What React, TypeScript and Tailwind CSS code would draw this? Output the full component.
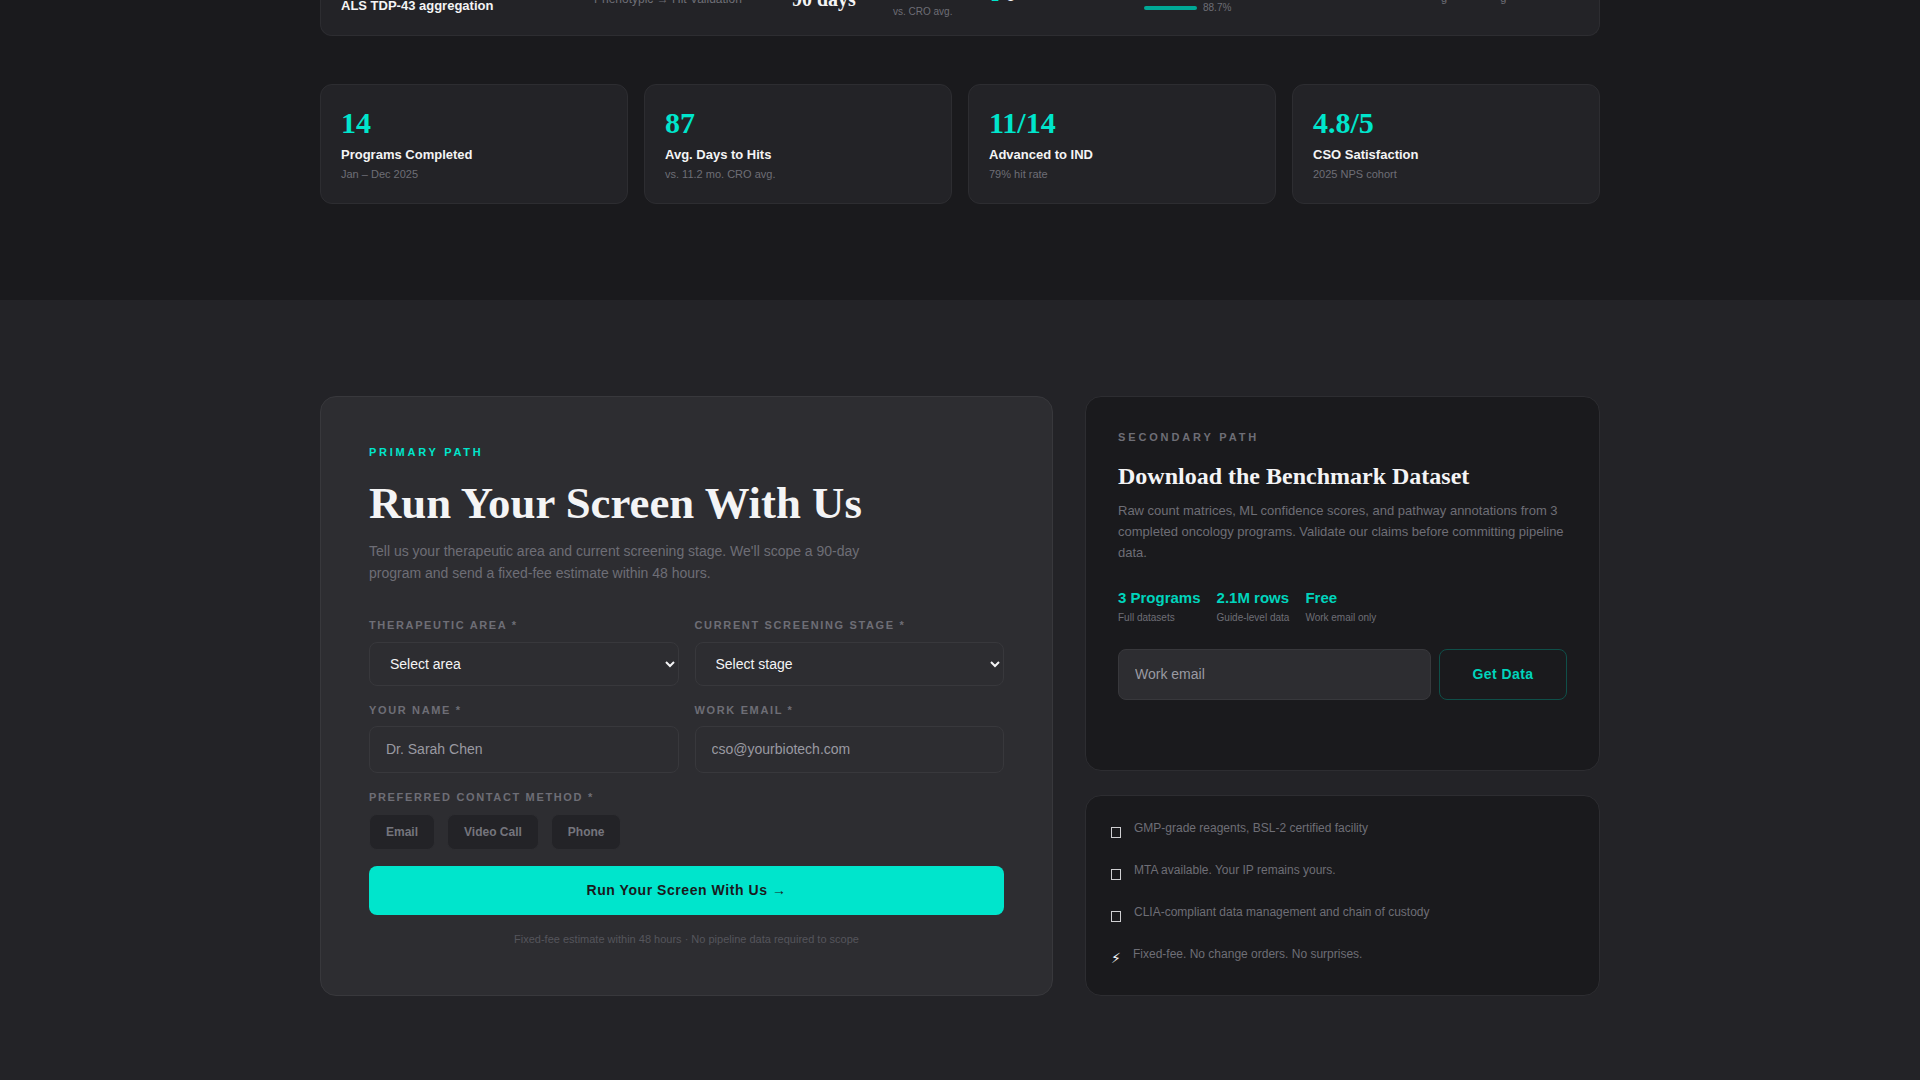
import React from 'react';

const SERIF = "font-['Liberation_Serif',serif]";

const stats = [
  { value: '14', label: 'Programs Completed', sub: 'Jan – Dec 2025' },
  { value: '87', label: 'Avg. Days to Hits', sub: 'vs. 11.2 mo. CRO avg.' },
  { value: '11/14', label: 'Advanced to IND', sub: '79% hit rate' },
  { value: '4.8/5', label: 'CSO Satisfaction', sub: '2025 NPS cohort' },
];

const dataset = [
  { value: '3 Programs', sub: 'Full datasets' },
  { value: '2.1M rows', sub: 'Guide-level data' },
  { value: 'Free', sub: 'Work email only' },
];

const trust = [
  { bolt: false, text: 'GMP-grade reagents, BSL-2 certified facility' },
  { bolt: false, text: 'MTA available. Your IP remains yours.' },
  { bolt: false, text: 'CLIA-compliant data management and chain of custody' },
  { bolt: true, text: 'Fixed-fee. No change orders. No surprises.' },
];

function FieldLabel({ children }: { children: React.ReactNode }) {
  return (
    <label className="block mb-[9px] text-[11px] leading-[13px] font-bold uppercase tracking-[0.15em] text-[#6e6e76]">
      {children}
    </label>
  );
}

function SelectField({ label, placeholder }: { label: string; placeholder: string }) {
  return (
    <div>
      <FieldLabel>{label}</FieldLabel>
      <select className="mt-[1px] w-full h-[44px] px-4 rounded-lg border border-[#38383c] bg-[#2d2d31] text-[14px] text-[#f4f4f5]">
        <option>{placeholder}</option>
      </select>
    </div>
  );
}

function TextField({ label, placeholder }: { label: string; placeholder: string }) {
  return (
    <div>
      <FieldLabel>{label}</FieldLabel>
      <input
        placeholder={placeholder}
        className="w-full h-[47px] px-4 pb-[2px] rounded-lg border border-[#38383c] bg-[#2d2d31] text-[14px] placeholder:text-[#9a9aa2]"
      />
    </div>
  );
}

export default function App() {
  return (
    <div className="h-screen overflow-hidden bg-[#232327] font-['Liberation_Sans',sans-serif]">
      {/* Results section, page is scrolled so the table top is cut off */}
      <section className="h-[300px] bg-[#1a1a1d] overflow-hidden">
        <div className="w-[1280px] mx-auto">
          <div className="-mt-[20px] h-[56px] rounded-b-xl border border-t-0 border-[#2d2d31] bg-[#232327] px-[20px] overflow-hidden">
            <div className="grid grid-cols-[253px_198px_198px_154px_286px_1fr] text-[#6e6e76]">
              <div className="pt-[18px] text-[13px] leading-[16px] font-semibold text-[#f4f4f5]">ALS TDP-43 aggregation</div>
              <div className="pt-[11px] text-[12px] leading-[16px]">Phenotypic → Hit Validation</div>
              <div className="pt-[8px]">
                <div className={`${SERIF} text-[20px] leading-[22px] font-bold text-[#f4f4f5]`}>90 days</div>
                <div className="ml-[101px] -mt-[5px] text-[10px] leading-[14px]">vs. CRO avg.</div>
              </div>
              <div className="pt-[8px] pl-[1px] text-[14px] leading-[16px] font-bold text-[#00e5cc] flex gap-[8px]">
                <span>1</span>
                <span className="text-[#f4f4f5]">3</span>
              </div>
              <div className="pt-[21px] flex items-center gap-[6px] self-start">
                <div className="w-[53px] h-[4px] rounded-full bg-[#00a896]" />
                <span className="text-[10px] leading-[14px]">88.7%</span>
              </div>
              <div className="pt-[10px] pl-[11px] text-[11px] leading-[16px] flex gap-[53px]">
                <span>g</span>
                <span>g</span>
              </div>
            </div>
          </div>

          <div className="mt-[48px] grid grid-cols-4 gap-4">
            {stats.map((s) => (
              <div key={s.label} className="h-[120px] rounded-xl border border-[#2d2d31] bg-[#232327] px-5 pt-[22px]">
                <div className={`${SERIF} text-[30px] leading-[32px] font-bold text-[#00e5cc]`}>{s.value}</div>
                <div className="mt-[8px] text-[13px] leading-[16px] font-semibold text-[#f4f4f5]">{s.label}</div>
                <div className="mt-[4px] text-[11px] leading-[14px] text-[#6e6e76]">{s.sub}</div>
              </div>
            ))}
          </div>
        </div>
      </section>

      {/* Conversion section */}
      <section className="pt-[96px]">
        <div className="w-[1280px] mx-auto grid grid-cols-[733px_515px] gap-8">
          <div className="h-[600px] rounded-2xl border border-[#38383c] bg-[#2d2d31] px-[48px] pt-[48px]">
            <div className="text-[11px] leading-[14px] font-bold uppercase tracking-[0.25em] text-[#00e5cc]">Primary Path</div>
            <h2 className={`${SERIF} mt-[19px] text-[44.8px] leading-[50px] font-bold text-[#f4f4f5]`}>Run Your Screen With Us</h2>
            <p className="mt-[12px] w-[520px] text-[14px] leading-[22px] text-[#6e6e76]">
              Tell us your therapeutic area and current screening stage. We'll scope a 90-day program and send a fixed-fee estimate within 48 hours.
            </p>

            <div className="mt-[35px] grid grid-cols-2 gap-x-4">
              <SelectField label="Therapeutic Area *" placeholder="Select area" />
              <SelectField label="Current Screening Stage *" placeholder="Select stage" />
            </div>
            <div className="mt-[18px] grid grid-cols-2 gap-x-4">
              <TextField label="Your Name *" placeholder="Dr. Sarah Chen" />
              <TextField label="Work Email *" placeholder="cso@yourbiotech.com" />
            </div>

            <div className="mt-[18px]">
              <FieldLabel>Preferred Contact Method *</FieldLabel>
              <div className="mt-[10px] flex gap-[12px]">
                {['Email', 'Video Call', 'Phone'].map((m) => (
                  <button key={m} className="h-[36px] px-[16px] rounded-lg border border-[#2d2d31] bg-[#232327] text-[12px] font-semibold text-[#75757d]">
                    {m}
                  </button>
                ))}
              </div>
            </div>

            <button className="mt-[16px] w-full h-[49px] rounded-lg bg-[#00e5cc] text-[14px] font-bold tracking-[0.04em] text-[#1a1a1d]">
              Run Your Screen With Us →
            </button>
            <p className="mt-[17px] text-center text-[11px] leading-[14px] text-[#55555c]">
              Fixed-fee estimate within 48 hours · No pipeline data required to scope
            </p>
          </div>

          <div className="flex flex-col gap-[24px]">
            <div className="h-[375px] rounded-2xl border border-[#2d2d31] bg-[#1a1a1d] px-[32px] pt-[33px]">
              <div className="text-[11px] leading-[14px] font-bold uppercase tracking-[0.26em] text-[#6e6e76]">Secondary Path</div>
              <h3 className={`${SERIF} mt-[17px] text-[24px] leading-[30px] font-bold text-[#f4f4f5]`}>Download the Benchmark Dataset</h3>
              <p className="mt-[9px] text-[13px] leading-[21px] text-[#6e6e76]">
                Raw count matrices, ML confidence scores, and pathway annotations from 3 completed oncology programs. Validate our claims before committing pipeline data.
              </p>
              <div className="mt-[25px] flex gap-[16px]">
                {dataset.map((d) => (
                  <div key={d.value}>
                    <div className="text-[15px] leading-[20px] font-bold text-[#00d4bc]">{d.value}</div>
                    <div className="mt-[3px] text-[10px] leading-[14px] text-[#6e6e76]">{d.sub}</div>
                  </div>
                ))}
              </div>
              <div className="mt-[24px] flex gap-[8px]">
                <input
                  placeholder="Work email"
                  className="flex-1 min-w-0 h-[51px] px-4 pb-[2px] rounded-lg border border-[#38383c] bg-[#2d2d31] text-[14px] placeholder:text-[#9a9aa2]"
                />
                <button className="w-[128px] h-[51px] rounded-lg border border-[#0f4f49] bg-transparent text-[14px] font-bold tracking-[0.03em] text-[#00d4bc]">
                  Get Data
                </button>
              </div>
            </div>

            <div className="h-[201px] rounded-2xl border border-[#2d2d31] bg-[#1a1a1d] px-[24px] pt-[24px] flex flex-col gap-[18px]">
              {trust.map((t) => (
                <div key={t.text} className="flex gap-[8px] h-[24px]">
                  {t.bolt ? (
                    <span className="w-[15px] shrink-0 pt-[3px] pl-[1px] font-['DejaVu_Sans',sans-serif] text-[14px] leading-[18px] text-[#f4f4f5]">{'\u26A1\uFE0E'}</span>
                  ) : (
                    <span className="w-[16px] shrink-0 pl-[1px]">
                      <span className="block mt-[7px] w-[10px] h-[11px] border border-[#cfcfd2]" />
                    </span>
                  )}
                  <span className="text-[12px] leading-[16px] text-[#6e6e76]">{t.text}</span>
                </div>
              ))}
            </div>
          </div>
        </div>
      </section>
    </div>
  );
}
